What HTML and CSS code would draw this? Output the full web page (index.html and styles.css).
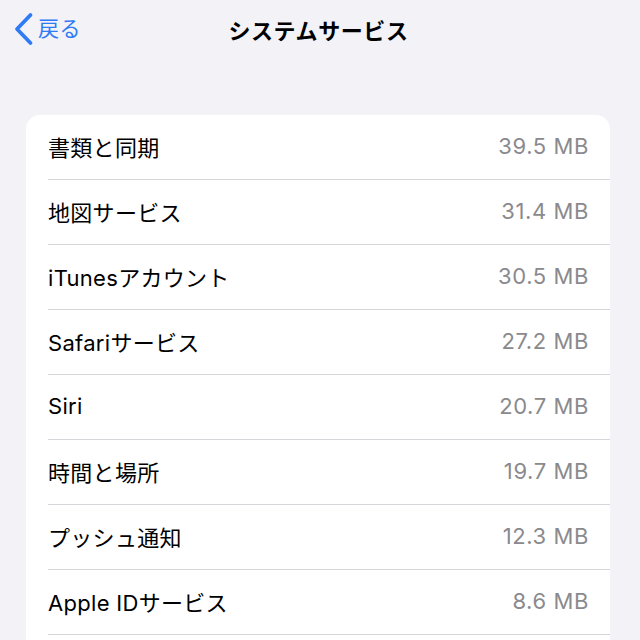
FILE: index.html
```html
<!DOCTYPE html>
<html lang="ja">
<head>
<meta charset="utf-8">
<link rel="stylesheet" href="styles.css">
</head>
<body>
<header class="nav">
  <a class="back">
    <svg class="chev" width="22" height="34" viewBox="0 0 22 34"><path d="M17.5 3 L4 17 L17.5 31" fill="none" stroke="#2f7bf5" stroke-width="3.8" stroke-linecap="round" stroke-linejoin="round"/></svg>
    <span class="back-label">戻る</span>
  </a>
  <h1 class="title">システムサービス</h1>
</header>
<main class="content">
  <ul class="list">
    <li class="row"><span class="label">書類と同期</span><span class="value">39.5 MB</span></li>
    <li class="row"><span class="label">地図サービス</span><span class="value">31.4 MB</span></li>
    <li class="row"><span class="label">iTunesアカウント</span><span class="value">30.5 MB</span></li>
    <li class="row"><span class="label">Safariサービス</span><span class="value">27.2 MB</span></li>
    <li class="row"><span class="label">Siri</span><span class="value">20.7 MB</span></li>
    <li class="row"><span class="label">時間と場所</span><span class="value">19.7 MB</span></li>
    <li class="row"><span class="label">プッシュ通知</span><span class="value">12.3 MB</span></li>
    <li class="row"><span class="label">Apple IDサービス</span><span class="value">8.6 MB</span></li>
    <li class="row"><span class="label">&nbsp;</span><span class="value"></span></li>
  </ul>
</main>
</body>
</html>
```
FILE: styles.css
```css
html, body {
  margin: 0;
  padding: 0;
  background: #f2f2f7;
  font-family: Inter, "Noto Sans CJK JP", sans-serif;
  height: 640px;
  overflow: hidden;
}
.nav {
  position: relative;
  height: 58px;
  display: flex;
  align-items: center;
  justify-content: center;
}
.back {
  position: absolute;
  left: 13px;
  top: 12px;
  display: flex;
  align-items: center;
  gap: 3px;
  color: #2f7bf5;
}
.chev { display: block; }
.back-label {
  font-size: 21px;
  line-height: 34px;
  letter-spacing: 0.5px;
}
.title {
  margin: 0;
  font-size: 22px;
  font-weight: 700;
  color: #000;
  letter-spacing: 0.6px;
  margin-left: -3px;
}
.content {
  padding: 57px 30px 0 26px;
}
.list {
  list-style: none;
  margin: 0;
  padding: 0;
  background: #fff;
  border-radius: 14px;
  overflow: hidden;
}
.row {
  height: 62px;
  padding-bottom: 2px;
  margin-left: 22px;
  padding-right: 21px;
  display: flex;
  align-items: center;
  justify-content: space-between;
  border-bottom: 1px solid #d6d6da;
  font-size: 22px;
}
.label {
  color: #000;
  letter-spacing: 0.3px;
}
.value {
  color: #8a8a8e;
  letter-spacing: 0.6px;
}
```
